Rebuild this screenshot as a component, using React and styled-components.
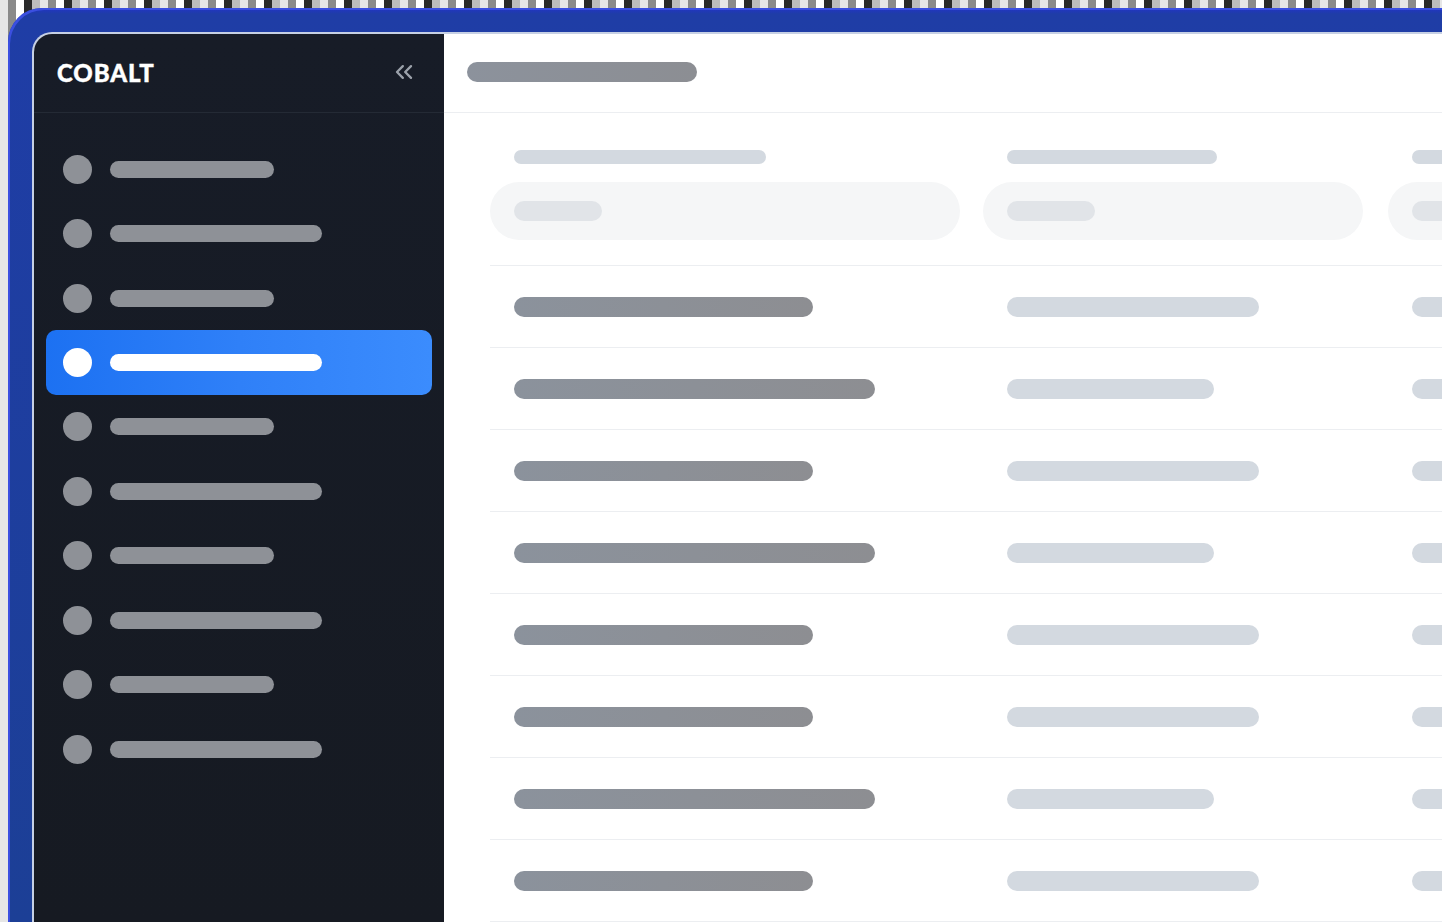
import React from 'react';
import styled, { createGlobalStyle } from 'styled-components';
import { ChevronsLeft } from 'lucide-react';

const GlobalStyle = createGlobalStyle`
  html, body {
    margin: 0;
    padding: 0;
    height: 100%;
    overflow: hidden;
  }
  body {
    font-family: "Lato", "Liberation Sans", sans-serif;
    background:
      repeating-linear-gradient(90deg, #e6e6e6 0 8px, #8a8a8a 8px 16px, #ffffff 16px 24px, #2a2a2a 24px 32px, #bdbdbd 32px 40px);
  }
  #root {
    height: 100%;
  }
`;

const Frame = styled.div`
  box-sizing: border-box;
  height: calc(100% - 8px);
  margin: 8px 0 0 8px;
  padding: 24px 0 0 24px;
  border-top-left-radius: 34px;
  background:
    linear-gradient(180deg, #2234c8 0, #1f3da6 6px, #1c3f96 100%);
  box-shadow: inset 2px 2px 0 #3b4fe0;
`;

const Window = styled.div`
  box-sizing: border-box;
  display: flex;
  height: 100%;
  border-left: 2px solid #c6d0e4;
  border-top: 2px solid #c6d0e4;
  border-top-left-radius: 20px;
  overflow: hidden;
  background: #ffffff;
`;

const Sidebar = styled.aside`
  flex: 0 0 410px;
  display: flex;
  flex-direction: column;
  background: linear-gradient(180deg, #171c27 0%, #161a22 100%);
`;

const SideHeader = styled.div`
  box-sizing: border-box;
  height: 79px;
  display: flex;
  align-items: center;
  justify-content: space-between;
  padding: 0 26px 2px 23px;
  border-bottom: 1px solid #242a35;
`;

const Logo = styled.div`
  font-family: "Lato", sans-serif;
  font-weight: 900;
  font-size: 24px;
  letter-spacing: 0.9px;
  color: #ffffff;
  -webkit-text-stroke: 0.4px #ffffff;
`;

const Collapse = styled.button`
  display: flex;
  padding: 0;
  border: 0;
  background: none;
  color: #9ba1aa;
  cursor: pointer;
`;

const Nav = styled.nav`
  display: flex;
  flex-direction: column;
  padding: 24px 12px 0;
`;

const NavItem = styled.div`
  height: 64.44px;
  display: flex;
  align-items: center;
  gap: 18px;
  padding-left: 17px;
  border-radius: 10px;
  background: ${p => (p.$active ? 'linear-gradient(90deg, #1c71f2 0%, #2f80f8 50%, #3b8cfd 100%)' : 'transparent')};
`;

const Dot = styled.span`
  width: 29px;
  height: 29px;
  border-radius: 50%;
  background: ${p => (p.$active ? '#ffffff' : '#8e9197')};
`;

const NavBar = styled.span`
  width: ${p => (p.$long ? 212 : 164)}px;
  height: 17px;
  border-radius: 9px;
  background: ${p => (p.$active ? '#ffffff' : '#8e9197')};
`;

const Main = styled.main`
  flex: 1;
  min-width: 0;
  display: flex;
  flex-direction: column;
`;

const TopBar = styled.div`
  box-sizing: border-box;
  height: 79px;
  display: flex;
  align-items: center;
  padding: 0 0 2px 23px;
  border-bottom: 1px solid #eceef1;
`;

const TitleBar = styled.span`
  width: 230px;
  height: 20px;
  border-radius: 10px;
  background: linear-gradient(90deg, #8c929c, #8c8e93);
`;

const Table = styled.div`
  padding-left: 46px;
`;

const Grid = styled.div`
  display: grid;
  grid-template-columns: 493px 405px 1fr;
  border-bottom: 1px solid #eceef1;
`;

const HeadGrid = styled(Grid)`
  padding: 37px 0 25px;
  row-gap: 18px;
`;

const HeadLabel = styled.span`
  width: ${p => p.$w}px;
  height: 14px;
  margin-left: 24px;
  border-radius: 7px;
  background: #d3d9e0;
`;

const FilterPill = styled.div`
  height: 58px;
  margin-right: ${p => p.$gap}px;
  display: flex;
  align-items: center;
  padding-left: 24px;
  border-radius: 29px;
  background: #f5f6f7;
`;

const FilterBar = styled.span`
  width: 88px;
  height: 20px;
  border-radius: 10px;
  background: #e1e4e8;
`;

const Row = styled(Grid)`
  height: 81px;
  align-items: center;
`;

const Cell = styled.div`
  padding-left: 24px;
  display: flex;
`;

const CellBar = styled.span`
  width: ${p => p.$w}px;
  height: 20px;
  border-radius: 10px;
  background: ${p => (p.$dark ? 'linear-gradient(90deg, #8b929c, #8d8e92)' : '#d3d9e0')};
`;

const navItems = [false, true, false, true, false, true, false, true, false, true];
const rows = [
  [299, 252], [361, 207], [299, 252], [361, 207],
  [299, 252], [299, 252], [361, 207], [299, 252],
];

export default function App() {
  return (
    <>
      <GlobalStyle />
      <Frame>
        <Window>
          <Sidebar>
            <SideHeader>
              <Logo>COBALT</Logo>
              <Collapse aria-label="Collapse sidebar">
                <ChevronsLeft size={28} strokeWidth={2} />
              </Collapse>
            </SideHeader>
            <Nav>
              {navItems.map((long, i) => {
                const active = i === 3;
                return (
                  <NavItem key={i} $active={active}>
                    <Dot $active={active} />
                    <NavBar $long={long} $active={active} />
                  </NavItem>
                );
              })}
            </Nav>
          </Sidebar>
          <Main>
            <TopBar>
              <TitleBar />
            </TopBar>
            <Table>
              <HeadGrid>
                <HeadLabel $w={252} />
                <HeadLabel $w={210} />
                <HeadLabel $w={200} />
                <FilterPill $gap={23}><FilterBar /></FilterPill>
                <FilterPill $gap={25}><FilterBar /></FilterPill>
                <FilterPill $gap={0}><FilterBar /></FilterPill>
              </HeadGrid>
              {rows.map(([a, b], i) => (
                <Row key={i}>
                  <Cell><CellBar $dark $w={a} /></Cell>
                  <Cell><CellBar $w={b} /></Cell>
                  <Cell><CellBar $w={200} /></Cell>
                </Row>
              ))}
            </Table>
          </Main>
        </Window>
      </Frame>
    </>
  );
}
